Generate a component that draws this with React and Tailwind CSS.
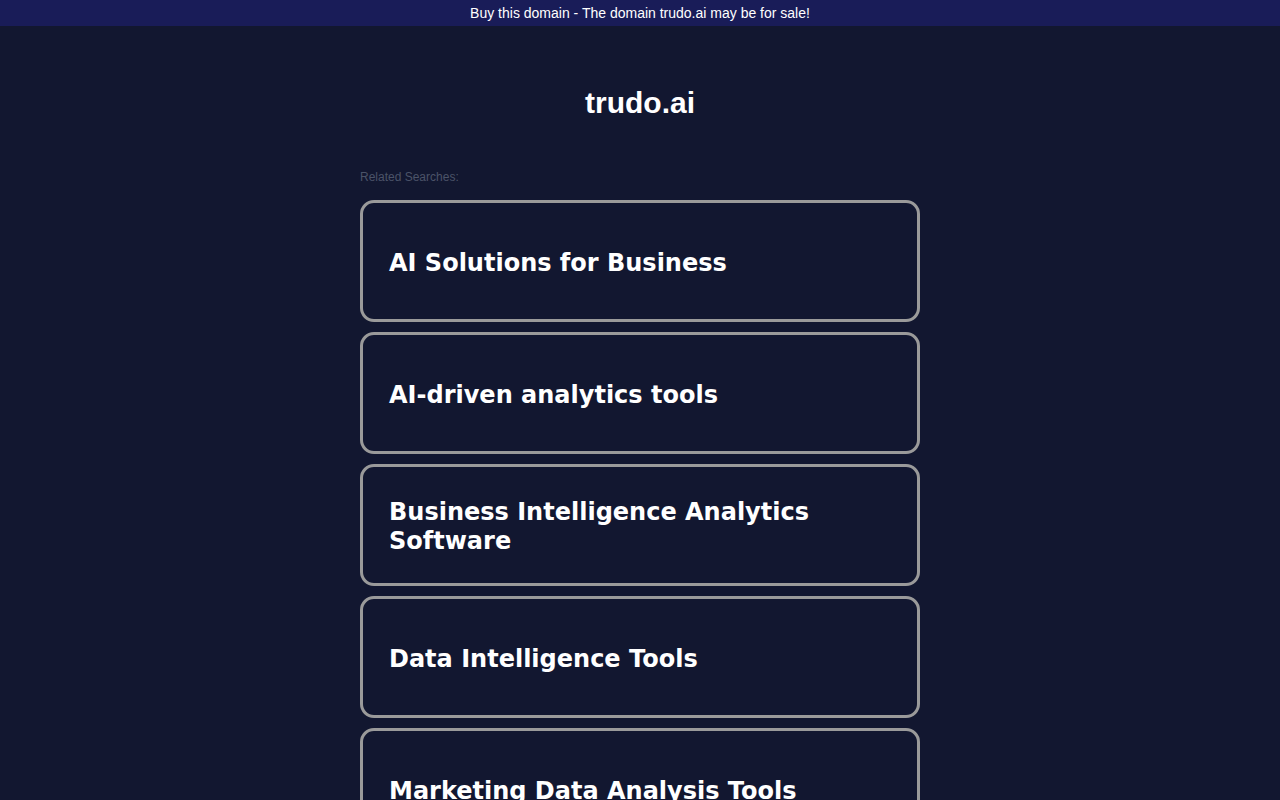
const searches = [
  "AI Solutions for Business",
  "AI-driven analytics tools",
  "Business Intelligence Analytics Software",
  "Data Intelligence Tools",
  "Marketing Data Analysis Tools",
];

export default function App() {
  return (
    <div className="min-h-screen bg-[#121730] font-['Liberation_Sans',Arial,sans-serif]">
      <div className="h-[26px] bg-[#191c58] flex items-center justify-center text-white text-[14px]">
        Buy this domain - The domain trudo.ai may be for sale!
      </div>

      <div className="w-[560px] mx-auto">
        <h1 className="text-white text-[30px] font-bold text-center pt-[58px] leading-[38px]">
          trudo.ai
        </h1>

        <p className="mt-[46px] text-[12px] text-[#4b5368] leading-[16px] pt-[1px]">
          Related Searches:
        </p>

        <div className="mt-[15px] flex flex-col gap-[10px]">
          {searches.map((s) => (
            <a
              key={s}
              href="#"
              className="h-[122px] flex items-center px-[26px] pt-[4px] border-[3px] border-[#9a9a9a] rounded-[14px] text-white text-[24px] font-bold leading-[29px] font-['DejaVu_Sans',Verdana,sans-serif]"
            >
              {s}
            </a>
          ))}
        </div>
      </div>
    </div>
  );
}
